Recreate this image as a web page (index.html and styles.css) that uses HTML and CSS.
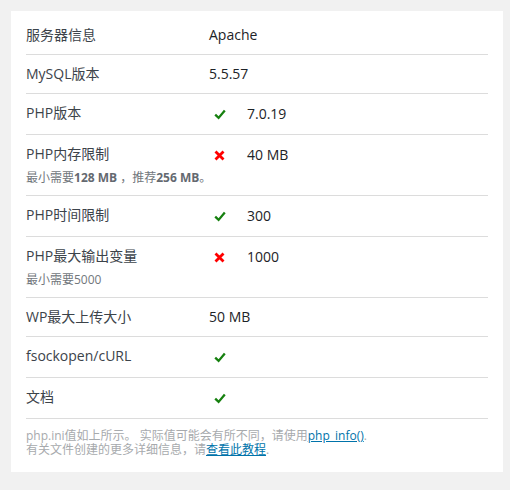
FILE: index.html
```html
<!DOCTYPE html>
<html lang="zh-CN">
<head>
<meta charset="utf-8">
<title>系统状态</title>
<link rel="stylesheet" href="styles.css">
</head>
<body>
<div class="panel">
  <div class="row">
    <div class="label">服务器信息</div>
    <div class="value">Apache</div>
  </div>
  <div class="row">
    <div class="label">MySQL版本</div>
    <div class="value">5.5.57</div>
  </div>
  <div class="row">
    <div class="label">PHP版本</div>
    <div class="value"><span class="icon"><svg class="ok" viewBox="0 0 12 11" width="12" height="11"><path d="M1.2 5.6 L4.6 8.9 L10.8 1.6" /></svg></span>7.0.19</div>
  </div>
  <div class="row">
    <div class="label">PHP内存限制</div>
    <div class="value"><span class="icon"><svg class="bad" viewBox="0 0 11 11" width="11" height="11"><path d="M1.5 1.5 L9.5 9.5 M9.5 1.5 L1.5 9.5" /></svg></span>40 MB</div>
    <div class="note">最小需要<b>128 MB</b> ，推荐<b>256 MB</b>。</div>
  </div>
  <div class="row">
    <div class="label">PHP时间限制</div>
    <div class="value"><span class="icon"><svg class="ok" viewBox="0 0 12 11" width="12" height="11"><path d="M1.2 5.6 L4.6 8.9 L10.8 1.6" /></svg></span>300</div>
  </div>
  <div class="row">
    <div class="label">PHP最大输出变量</div>
    <div class="value"><span class="icon"><svg class="bad" viewBox="0 0 11 11" width="11" height="11"><path d="M1.5 1.5 L9.5 9.5 M9.5 1.5 L1.5 9.5" /></svg></span>1000</div>
    <div class="note">最小需要5000</div>
  </div>
  <div class="row">
    <div class="label">WP最大上传大小</div>
    <div class="value">50 MB</div>
  </div>
  <div class="row">
    <div class="label">fsockopen/cURL</div>
    <div class="value"><span class="icon"><svg class="ok" viewBox="0 0 12 11" width="12" height="11"><path d="M1.2 5.6 L4.6 8.9 L10.8 1.6" /></svg></span></div>
  </div>
  <div class="row">
    <div class="label">文档</div>
    <div class="value"><span class="icon"><svg class="ok" viewBox="0 0 12 11" width="12" height="11"><path d="M1.2 5.6 L4.6 8.9 L10.8 1.6" /></svg></span></div>
  </div>
  <p class="footer">php.ini值如上所示。 实际值可能会有所不同，请使用<a href="#">php_info()</a>.<br>有关文件创建的更多详细信息，请<a href="#">查看此教程</a>.</p>
</div>
</body>
</html>
```

FILE: styles.css
```css
html, body {
  margin: 0;
  padding: 0;
}
body {
  background: #f1f1f1;
  padding: 11px 7px 18px 11px;
  font-family: "Open Sans", "Noto Sans CJK SC", sans-serif;
  font-size: 14px;
  color: #444;
}
.panel {
  background: #fff;
  width: 462px;
  padding: 5px 15px 15px 15px;
}
.row {
  display: grid;
  grid-template-columns: 183px 1fr;
  align-items: start;
  padding: 9px 0;
  border-bottom: 1px solid #dcdcdc;
  line-height: 20px;
}
.label {
  color: #3c434a;
}
.value {
  display: flex;
  align-items: center;
  min-height: 20px;
  color: #1d2327;
}
.icon {
  display: inline-flex;
  align-items: center;
  width: 38px;
  height: 22px;
  padding-left: 5px;
  box-sizing: border-box;
}
.icon svg {
  display: block;
  fill: none;
}
.ok path {
  stroke: #16800f;
  stroke-width: 2.3;
  stroke-linecap: butt;
  stroke-linejoin: miter;
}
.bad path {
  stroke: #ff0000;
  stroke-width: 2.8;
}
.note {
  grid-column: 1 / -1;
  margin-top: 4px;
  font-size: 12px;
  line-height: 16px;
  white-space: nowrap;
  color: #72777c;
}
.note b {
  font-weight: 700;
  color: #646970;
}
.footer {
  margin: 10px 0 0 0;
  font-size: 12px;
  line-height: 14px;
  color: #a7aaad;
}
.footer a {
  color: #0073aa;
  text-decoration: underline;
}
```
